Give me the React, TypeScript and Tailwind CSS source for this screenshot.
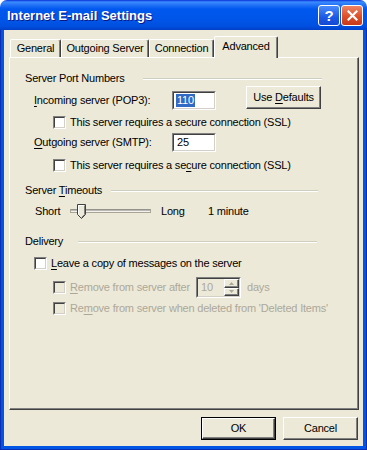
import React from 'react';

// classic 3D borders used by the controls inside the dialog
const Sunken: React.FC<{ className?: string; disabled?: boolean; children?: React.ReactNode }> = ({ className = '', disabled, children }) => (
    <div className={`border border-t-[#808080] border-l-[#808080] border-b-white border-r-white shrink-0 ${className}`}>
        <div className={`w-full h-full border border-t-[#404040] border-l-[#404040] border-b-[#D4D0C8] border-r-[#D4D0C8] flex items-center ${disabled ? 'bg-[#ECE9D8]' : 'bg-white'}`}>
            {children}
        </div>
    </div>
);

const Check: React.FC<{ disabled?: boolean }> = ({ disabled }) => <Sunken disabled={disabled} className="w-[13px] h-[13px]" />;

const RaisedButton: React.FC<{ className?: string; children: React.ReactNode }> = ({ className = '', children }) => (
    <div className={`border border-t-white border-l-white border-r-[#404040] border-b-[#404040] bg-[#ECE9D8] shadow-[inset_-1px_-1px_#808080] flex items-center justify-center shrink-0 ${className}`}>
        {children}
    </div>
);

const Heading: React.FC<{ label: React.ReactNode; textWidth: string; width: string }> = ({ label, textWidth, width }) => (
    <div className={`flex items-center h-[13px] ml-[15px] ${width}`}>
        <span className={`shrink-0 ${textWidth}`}>{label}</span>
        <div className="flex-1 border-t border-t-[#D0CEBF] border-b border-b-white" />
    </div>
);

const U: React.FC<{ children: React.ReactNode }> = ({ children }) => <span className="underline underline-offset-[2px]">{children}</span>;

const App: React.FC = () => {
    return (
        <div className="w-[367px] h-[450px] flex flex-col rounded-t-[7px] overflow-hidden font-['Tahoma','Liberation_Sans',sans-serif] text-[11px] leading-[13px] tracking-[-0.2px] text-black">
            {/* Title bar */}
            <div className="h-[30px] shrink-0 flex items-center pl-[7px] pr-[4px] bg-[linear-gradient(to_bottom,#0831D9_0px,#3C8CFE_2px,#2272F6_5px,#0058EE_9px,#0055E8_20px,#0050E0_26px,#0040C8_30px)]">
                <span className="font-['Liberation_Sans',sans-serif] font-bold text-[13px] tracking-normal text-white [text-shadow:1px_1px_#0A1883] flex-1">
                    Internet E-mail Settings
                </span>
                <div className="w-[22px] h-[21px] rounded-[3px] border border-white bg-[linear-gradient(to_bottom,#4A8CFA,#1C58E6_60%,#1448D4)] flex items-center justify-center text-white font-bold text-[15px] font-['Liberation_Sans',sans-serif]">
                    ?
                </div>
                <div className="w-[22px] h-[21px] ml-[1px] rounded-[3px] border border-white bg-[linear-gradient(to_bottom,#EE8464,#DD4F2A_55%,#C8391A)] flex items-center justify-center">
                    <svg width="11" height="11" viewBox="0 0 11 11">
                        <path d="M1.5 1.5 L9.5 9.5 M9.5 1.5 L1.5 9.5" stroke="white" strokeWidth="2.2" strokeLinecap="square" />
                    </svg>
                </div>
            </div>

            {/* Frame */}
            <div className="flex-1 flex flex-col bg-[#0055E5] border-x border-b border-[#0A2FB4] px-[3px] pb-[3px]">
                <div className="flex-1 flex flex-col bg-[#ECE9D8] pl-[5px]">
                    {/* Tabs */}
                    <div className="h-[27px] flex items-end pl-[1px]">
                        <div className="w-[51px] h-[18px] border-t border-l border-white border-r border-r-[#404040] shadow-[inset_-1px_0_#808080] rounded-t-[2px] flex items-center justify-center">General</div>
                        <div className="w-[88px] h-[18px] border-t border-l border-white border-r border-r-[#404040] shadow-[inset_-1px_0_#808080] rounded-t-[2px] flex items-center justify-center">Outgoing Server</div>
                        <div className="w-[65px] h-[18px] border-t border-l border-white border-r border-r-[#404040] shadow-[inset_-1px_0_#808080] rounded-t-[2px] flex items-center justify-center">Connection</div>
                        <div className="w-[64px] h-[22px] -mb-[1px] relative z-10 bg-[#ECE9D8] border-t border-l border-white border-r border-r-[#404040] shadow-[inset_-1px_0_#808080] rounded-t-[2px] flex items-start justify-center pt-[3px]">Advanced</div>
                    </div>

                    {/* Panel */}
                    <div className="w-[350px] h-[353px] shrink-0 flex flex-col border border-t-white border-l-white border-r-[#404040] border-b-[#404040] shadow-[inset_-1px_-1px_#808080]">
                        <div className="mt-[14px]">
                            <Heading label="Server Port Numbers" textWidth="w-[118px]" width="w-[297px]" />
                        </div>

                        <div className="mt-[1px] h-[24px] flex items-start ml-[24px]">
                            <div className="mt-[5px] h-[19px] flex items-center">
                                <span className="w-[138px]"><U>I</U>ncoming server (POP3):</span>
                                <Sunken className="w-[44px] h-[19px]">
                                    <span className="ml-[2px] bg-[#316AC5] text-white px-[1px]">110</span>
                                </Sunken>
                            </div>
                            <RaisedButton className="ml-[30px] w-[75px] h-[23px]">
                                <span>Use <U>D</U>efaults</span>
                            </RaisedButton>
                        </div>

                        <div className="mt-[6px] h-[13px] flex items-center gap-[4px] ml-[43px]">
                            <Check />
                            <span>This server requires a secure connection (SSL)</span>
                        </div>

                        <div className="mt-[4px] h-[19px] flex items-center ml-[24px]">
                            <span className="w-[138px]"><U>O</U>utgoing server (SMTP):</span>
                            <Sunken className="w-[44px] h-[19px]">
                                <span className="ml-[3px]">25</span>
                            </Sunken>
                        </div>

                        <div className="mt-[7px] h-[13px] flex items-center gap-[4px] ml-[43px]">
                            <Check />
                            <span>This server requires a se<U>c</U>ure connection (SSL)</span>
                        </div>

                        <div className="mt-[12px]">
                            <Heading label={<>Server <U>T</U>imeouts</>} textWidth="w-[86px]" width="w-[293px]" />
                        </div>

                        <div className="mt-[5px] h-[18px] flex items-center ml-[25px]">
                            <span className="w-[35px]">Short</span>
                            <svg width="82" height="18" viewBox="0 0 82 18">
                                <rect x="0.5" y="7.5" width="80" height="3" fill="#F4F2EA" stroke="#A8A597" />
                                <line x1="1" y1="8" x2="80" y2="8" stroke="#808080" />
                                <path d="M7.5 2.5 H15.5 V12.5 L11.5 16.5 L7.5 12.5 Z" fill="#ECE9D8" stroke="#404040" />
                                <path d="M8.5 12 V3.5 H14.5" fill="none" stroke="white" />
                                <path d="M14.5 3.5 V12.5 L11.5 15.5" fill="none" stroke="#808080" />
                            </svg>
                            <span className="ml-[9px] w-[47px]">Long</span>
                            <span>1 minute</span>
                        </div>

                        <div className="mt-[15px]">
                            <Heading label="Delivery" textWidth="w-[53px]" width="w-[292px]" />
                        </div>

                        <div className="mt-[9px] h-[13px] flex items-center gap-[4px] ml-[24px]">
                            <Check />
                            <span><U>L</U>eave a copy of messages on the server</span>
                        </div>

                        <div className="mt-[7px] h-[21px] flex items-center ml-[43px] text-[#ACA899]">
                            <Check disabled />
                            <span className="ml-[4px] w-[126px]"><U>R</U>emove from server after</span>
                            <Sunken disabled className="w-[45px] h-[21px]">
                                <span className="ml-[3px] flex-1">10</span>
                                <div className="w-[15px] h-full flex flex-col">
                                    <RaisedButton className="w-[15px] h-[8px] flex-1">
                                        <svg width="5" height="3" viewBox="0 0 5 3"><path d="M0 3 L2.5 0 L5 3 Z" fill="#ACA899" /></svg>
                                    </RaisedButton>
                                    <RaisedButton className="w-[15px] h-[8px] flex-1">
                                        <svg width="5" height="3" viewBox="0 0 5 3"><path d="M0 0 L2.5 3 L5 0 Z" fill="#ACA899" /></svg>
                                    </RaisedButton>
                                </div>
                            </Sunken>
                            <span className="ml-[6px]">days</span>
                        </div>

                        <div className="mt-[4px] h-[13px] flex items-center gap-[4px] ml-[43px] text-[#ACA899]">
                            <Check disabled />
                            <span>Re<U>m</U>ove from server when deleted from 'Deleted Items'</span>
                        </div>
                    </div>

                    {/* Buttons */}
                    <div className="mt-[7px] flex justify-end gap-[7px] pr-[5px]">
                        <div className="w-[75px] h-[23px] border border-black flex">
                            <RaisedButton className="flex-1 h-full">OK</RaisedButton>
                        </div>
                        <RaisedButton className="w-[75px] h-[23px]">Cancel</RaisedButton>
                    </div>
                </div>
            </div>
        </div>
    );
};

export default App;
